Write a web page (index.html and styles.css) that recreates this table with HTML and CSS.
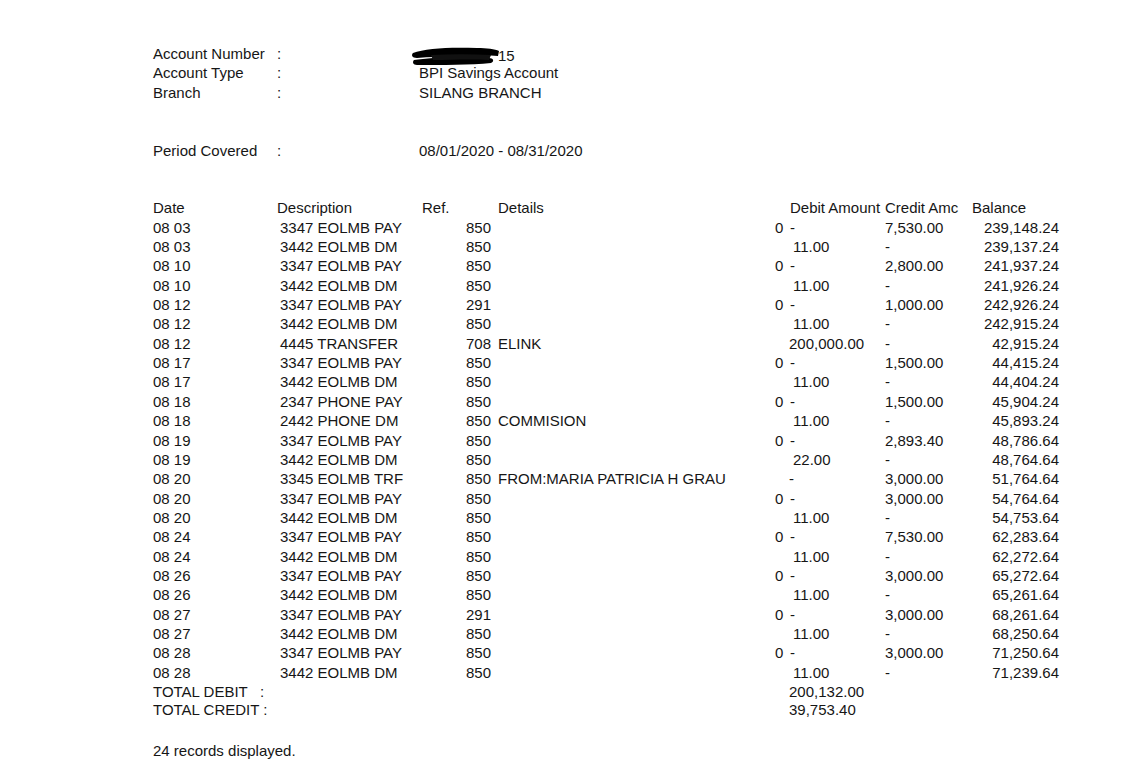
FILE: index.html
```html
<!DOCTYPE html>
<html lang="en">
<head>
<meta charset="utf-8">
<title>Statement</title>
<link rel="stylesheet" href="styles.css">
</head>
<body>
<div class="page">
  <div class="info">
    <div class="irow"><span>Account Number</span><span>:</span><span class="acct"><svg class="redact" width="90" height="22" viewBox="0 0 90 22"><path d="M2 7 C 14 2, 40 1, 66 2 C 76 2, 84 3, 88 5 L 87 10 C 70 9, 40 10, 6 12 C 1 12, 0 9, 2 7 Z" fill="#000"/><path d="M3 14 C 20 11, 48 11, 78 12 C 82 12, 84 15, 80 17 C 60 19, 30 19, 6 19 C 2 19, 1 16, 3 14 Z" fill="#000"/><path d="M20 9 C 40 8, 60 8, 80 9 L 78 14 C 58 13, 40 14, 22 14 Z" fill="#111"/></svg><span class="acct-end">15</span></span></div>
    <div class="irow"><span>Account Type</span><span>:</span><span>BPI Savings Account</span></div>
    <div class="irow"><span>Branch</span><span>:</span><span>SILANG BRANCH</span></div>
  </div>
  <div class="irow period"><span>Period Covered</span><span>:</span><span>08/01/2020 - 08/31/2020</span></div>

  <div class="table">
    <div class="row head"><span>Date</span><span>Description</span><span class="ref-h">Ref.</span><span>Details</span><span class="amt-h">Debit Amount</span><span>Credit Amc</span><span>Balance</span></div>
    <div class="row"><span>08 03</span><span class="desc">3347 EOLMB PAY</span><span class="ref">850</span><span></span><span class="deb"><span class="zero">0</span>-</span><span>7,530.00</span><span class="bal">239,148.24</span></div>
    <div class="row"><span>08 03</span><span class="desc">3442 EOLMB DM</span><span class="ref">850</span><span></span><span class="deb amt">11.00</span><span>-</span><span class="bal">239,137.24</span></div>
    <div class="row"><span>08 10</span><span class="desc">3347 EOLMB PAY</span><span class="ref">850</span><span></span><span class="deb"><span class="zero">0</span>-</span><span>2,800.00</span><span class="bal">241,937.24</span></div>
    <div class="row"><span>08 10</span><span class="desc">3442 EOLMB DM</span><span class="ref">850</span><span></span><span class="deb amt">11.00</span><span>-</span><span class="bal">241,926.24</span></div>
    <div class="row"><span>08 12</span><span class="desc">3347 EOLMB PAY</span><span class="ref">291</span><span></span><span class="deb"><span class="zero">0</span>-</span><span>1,000.00</span><span class="bal">242,926.24</span></div>
    <div class="row"><span>08 12</span><span class="desc">3442 EOLMB DM</span><span class="ref">850</span><span></span><span class="deb amt">11.00</span><span>-</span><span class="bal">242,915.24</span></div>
    <div class="row"><span>08 12</span><span class="desc">4445 TRANSFER</span><span class="ref">708</span><span>ELINK</span><span class="deb big">200,000.00</span><span>-</span><span class="bal">42,915.24</span></div>
    <div class="row"><span>08 17</span><span class="desc">3347 EOLMB PAY</span><span class="ref">850</span><span></span><span class="deb"><span class="zero">0</span>-</span><span>1,500.00</span><span class="bal">44,415.24</span></div>
    <div class="row"><span>08 17</span><span class="desc">3442 EOLMB DM</span><span class="ref">850</span><span></span><span class="deb amt">11.00</span><span>-</span><span class="bal">44,404.24</span></div>
    <div class="row"><span>08 18</span><span class="desc">2347 PHONE PAY</span><span class="ref">850</span><span></span><span class="deb"><span class="zero">0</span>-</span><span>1,500.00</span><span class="bal">45,904.24</span></div>
    <div class="row"><span>08 18</span><span class="desc">2442 PHONE DM</span><span class="ref">850</span><span>COMMISION</span><span class="deb amt">11.00</span><span>-</span><span class="bal">45,893.24</span></div>
    <div class="row"><span>08 19</span><span class="desc">3347 EOLMB PAY</span><span class="ref">850</span><span></span><span class="deb"><span class="zero">0</span>-</span><span>2,893.40</span><span class="bal">48,786.64</span></div>
    <div class="row"><span>08 19</span><span class="desc">3442 EOLMB DM</span><span class="ref">850</span><span></span><span class="deb amt">22.00</span><span>-</span><span class="bal">48,764.64</span></div>
    <div class="row"><span>08 20</span><span class="desc">3345 EOLMB TRF</span><span class="ref">850</span><span>FROM:MARIA PATRICIA H GRAU</span><span class="deb big">-</span><span>3,000.00</span><span class="bal">51,764.64</span></div>
    <div class="row"><span>08 20</span><span class="desc">3347 EOLMB PAY</span><span class="ref">850</span><span></span><span class="deb"><span class="zero">0</span>-</span><span>3,000.00</span><span class="bal">54,764.64</span></div>
    <div class="row"><span>08 20</span><span class="desc">3442 EOLMB DM</span><span class="ref">850</span><span></span><span class="deb amt">11.00</span><span>-</span><span class="bal">54,753.64</span></div>
    <div class="row"><span>08 24</span><span class="desc">3347 EOLMB PAY</span><span class="ref">850</span><span></span><span class="deb"><span class="zero">0</span>-</span><span>7,530.00</span><span class="bal">62,283.64</span></div>
    <div class="row"><span>08 24</span><span class="desc">3442 EOLMB DM</span><span class="ref">850</span><span></span><span class="deb amt">11.00</span><span>-</span><span class="bal">62,272.64</span></div>
    <div class="row"><span>08 26</span><span class="desc">3347 EOLMB PAY</span><span class="ref">850</span><span></span><span class="deb"><span class="zero">0</span>-</span><span>3,000.00</span><span class="bal">65,272.64</span></div>
    <div class="row"><span>08 26</span><span class="desc">3442 EOLMB DM</span><span class="ref">850</span><span></span><span class="deb amt">11.00</span><span>-</span><span class="bal">65,261.64</span></div>
    <div class="row"><span>08 27</span><span class="desc">3347 EOLMB PAY</span><span class="ref">291</span><span></span><span class="deb"><span class="zero">0</span>-</span><span>3,000.00</span><span class="bal">68,261.64</span></div>
    <div class="row"><span>08 27</span><span class="desc">3442 EOLMB DM</span><span class="ref">850</span><span></span><span class="deb amt">11.00</span><span>-</span><span class="bal">68,250.64</span></div>
    <div class="row"><span>08 28</span><span class="desc">3347 EOLMB PAY</span><span class="ref">850</span><span></span><span class="deb"><span class="zero">0</span>-</span><span>3,000.00</span><span class="bal">71,250.64</span></div>
    <div class="row"><span>08 28</span><span class="desc">3442 EOLMB DM</span><span class="ref">850</span><span></span><span class="deb amt">11.00</span><span>-</span><span class="bal">71,239.64</span></div>
    <div class="row total"><span class="tlabel">TOTAL DEBIT   :</span><span class="deb big">200,132.00</span></div>
    <div class="row total"><span class="tlabel">TOTAL CREDIT :</span><span class="deb big">39,753.40</span></div>
  </div>

  <div class="records">24 records displayed.</div>
</div>
</body>
</html>
```
FILE: styles.css
```css
html, body {
  margin: 0;
  padding: 0;
  background: #ffffff;
}

.page {
  padding: 44px 0 0 153px;
  font-family: "Liberation Sans", Arial, sans-serif;
  font-size: 15px;
  color: #161616;
  line-height: 19.35px;
}

.irow {
  display: grid;
  grid-template-columns: 124px 142px auto;
  height: 19.35px;
}

.acct {
  display: flex;
  align-items: center;
}

.redact {
  display: block;
  margin-left: -8px;
  margin-top: 2px;
}

.acct-end {
  margin-left: -3px;
}

.period {
  margin-top: 39px;
}

.table {
  margin-top: 38px;
}

.row {
  display: grid;
  grid-template-columns: 124px 143px 78px 277px 110px 87px 87px;
  height: 19.35px;
  white-space: nowrap;
}

.desc {
  padding-left: 3px;
}

.ref-h {
  padding-left: 2px;
}

.ref {
  padding-left: 46px;
}

.amt-h {
  padding-left: 15px;
}

.deb.amt {
  padding-left: 18px;
}

.deb.big {
  padding-left: 14px;
}

.zero {
  display: inline-block;
  width: 15px;
}

.bal {
  text-align: right;
}

.total {
  grid-template-columns: 622px 110px;
  height: 18px;
}

.tlabel {
  white-space: pre;
}

.records {
  margin-top: 23px;
}
```
